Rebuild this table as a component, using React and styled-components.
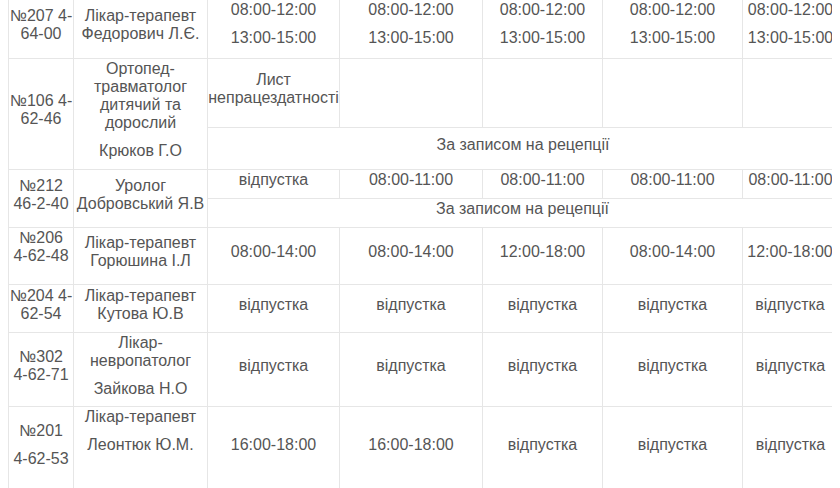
import React from 'react';
import styled, { createGlobalStyle } from 'styled-components';

const GlobalStyle = createGlobalStyle`
  body {
    margin: 0 8px;
    background: #fff;
    overflow: hidden;
    font-family: "Liberation Sans", Arial, sans-serif;
    font-size: 16px;
    color: #555;
  }
`;

const LINE = '#e6e6e6';

const Schedule = styled.div`
  display: grid;
  grid-template-columns: 65px 134px 132px 143px 120px 140px 95px;
  grid-template-rows: 59px 69px 42px 29px 29px 57px 48px 74px 84px;
  width: max-content;
  border-left: 1px solid ${LINE};
`;

const Cell = styled.div`
  grid-column: ${({ $c, $cs }) => `${$c} / span ${$cs || 1}`};
  grid-row: ${({ $r, $rs }) => `${$r} / span ${$rs || 1}`};
  box-sizing: border-box;
  min-width: 0;
  display: flex;
  flex-direction: column;
  justify-content: center;
  align-items: center;
  text-align: center;
  padding: ${({ $pt }) => ($pt ?? 2)}px 1px ${({ $pb }) => ($pb ?? 10)}px;
  border-bottom: 1px solid ${LINE};
  border-right: ${({ $open }) => ($open ? 'none' : `1px solid ${LINE}`)};
`;

const Para = styled.p`
  margin: 0;
  line-height: normal;

  & + & {
    margin-top: 10px;
  }
`;

const Line = styled.span`
  display: block;
  white-space: nowrap;
`;

const V = 'відпустка';
const Z = 'За записом на рецепції';

// one entry per slot in a row, columns 3..7
const slots = (r, values) =>
  values.map((v, i) => ({
    c: i + 3,
    r,
    p: v ? (Array.isArray(v) ? v.map((t) => [t]) : [[v]]) : [],
    open: i === 4 && ![6, 7].includes(r),
  }));

const cells = [
  // №207
  { c: 1, r: 1, p: [['№207 4-', '64-00']], pt: 1 },
  { c: 2, r: 1, p: [['Лікар-терапевт', 'Федорович Л.Є.']], pt: 1 },
  ...slots(1, Array(5).fill(['08:00-12:00', '13:00-15:00'])).map((s) => ({ ...s, pt: 0 })),

  // №106
  { c: 1, r: 2, rs: 2, p: [['№106 4-', '62-46']] },
  {
    c: 2, r: 2, rs: 2,
    p: [['Ортопед-', 'травматолог', 'дитячий та', 'дорослий'], ['Крюков Г.О']],
  },
  { c: 3, r: 2, p: [['Лист', 'непрацездатності']] },
  { c: 4, r: 2 },
  { c: 5, r: 2 },
  { c: 6, r: 2 },
  { c: 7, r: 2, open: true },
  { c: 3, r: 3, cs: 5, p: [[Z]], open: true },

  // №212
  { c: 1, r: 4, rs: 2, p: [['№212', '46-2-40']] },
  { c: 2, r: 4, rs: 2, p: [['Уролог', 'Добровський Я.В']] },
  ...slots(4, [V, '08:00-11:00', '08:00-11:00', '08:00-11:00', '08:00-11:00']),
  { c: 3, r: 5, cs: 5, p: [[Z]] },

  // №206
  { c: 1, r: 6, p: [['№206', '4-62-48']], pb: 20 },
  { c: 2, r: 6, p: [['Лікар-терапевт', 'Горюшина І.Л']] },
  ...slots(6, ['08:00-14:00', '08:00-14:00', '12:00-18:00', '08:00-14:00', '12:00-18:00']),

  // №204
  { c: 1, r: 7, p: [['№204 4-', '62-54']] },
  { c: 2, r: 7, p: [['Лікар-терапевт', 'Кутова Ю.В']] },
  ...slots(7, [V, V, V, V, V]),

  // №302
  { c: 1, r: 8, p: [['№302', '4-62-71']] },
  { c: 2, r: 8, p: [['Лікар-', 'невропатолог'], ['Зайкова Н.О']] },
  ...slots(8, [V, V, V, V, V]),

  // №201
  { c: 1, r: 9, p: [['№201'], ['4-62-53']] },
  { c: 2, r: 9, p: [['Лікар-терапевт'], ['Леонтюк Ю.М.']], pb: 38 },
  ...slots(9, ['16:00-18:00', '16:00-18:00', V, V, V]),
];

export default function App() {
  return (
    <>
      <GlobalStyle />
      <Schedule>
        {cells.map((cell) => (
          <Cell
            key={`${cell.r}-${cell.c}`}
            $c={cell.c}
            $r={cell.r}
            $cs={cell.cs}
            $rs={cell.rs}
            $pt={cell.pt}
            $pb={cell.pb}
            $open={cell.open}
          >
            {(cell.p || []).map((lines, i) => (
              <Para key={i}>
                {lines.map((t) => (
                  <Line key={t}>{t}</Line>
                ))}
              </Para>
            ))}
          </Cell>
        ))}
      </Schedule>
    </>
  );
}
